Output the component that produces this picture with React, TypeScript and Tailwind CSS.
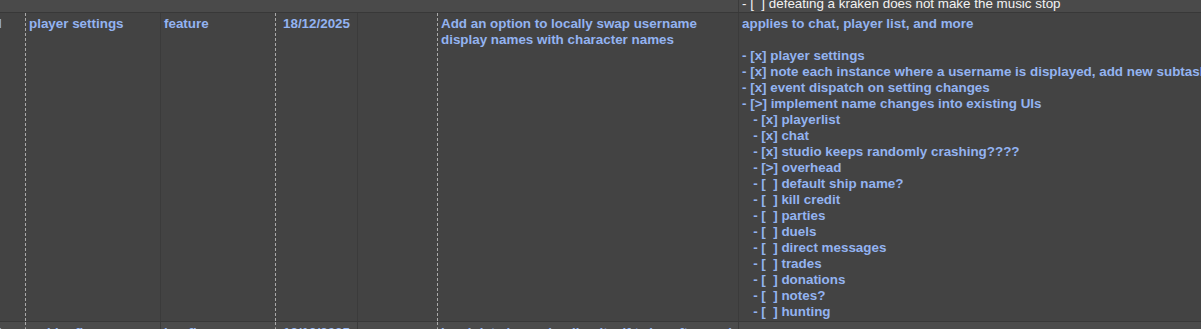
import React from "react";

// column widths + left rule for each cell (dashed user borders vs plain grid lines)
const cols = [
    "w-[25px] shrink-0 overflow-hidden",
    "w-[135px] shrink-0 overflow-hidden border-l border-dashed border-[#a9a9a9] pl-[3px]",
    "w-[115px] shrink-0 overflow-hidden border-l border-[#3b3b3b] pl-[3px]",
    "w-[82px] shrink-0 overflow-hidden border-l border-dashed border-[#a9a9a9] pl-[7px]",
    "w-[80px] shrink-0 overflow-hidden border-l border-[#3b3b3b] pl-[3px]",
    "w-[301px] shrink-0 overflow-hidden border-l border-dashed border-[#a9a9a9] pl-[3px]",
    "w-[463px] shrink-0 overflow-hidden border-l border-[#3b3b3b] pl-[3px]",
];

const Row = ({ cells, className }: { cells: React.ReactNode[]; className: string }) => (
    <div className={`flex shrink-0 overflow-hidden border-b border-[#383838] ${className}`}>
        {cols.map((c, i) => (
            <div key={i} className={c}>
                {cells[i]}
            </div>
        ))}
    </div>
);

const tasks = [
    "- [x] player settings",
    "- [x] note each instance where a username is displayed, add new subtasks",
    "- [x] event dispatch on setting changes",
    "- [>] implement name changes into existing UIs",
    "   - [x] playerlist",
    "   - [x] chat",
    "   - [x] studio keeps randomly crashing????",
    "   - [>] overhead",
    "   - [  ] default ship name?",
    "   - [  ] kill credit",
    "   - [  ] parties",
    "   - [  ] duels",
    "   - [  ] direct messages",
    "   - [  ] trades",
    "   - [  ] donations",
    "   - [  ] notes?",
    "   - [  ] hunting",
];

export default function App() {
    const blue = "pt-[3px] text-[13.4px] leading-4 font-bold text-[#93b3f1] whitespace-pre";
    return (
        <div className="w-[1201px] h-[329px] overflow-hidden bg-[#434343] font-['Liberation_Sans',Arial,sans-serif] flex flex-col">
            <Row
                className="h-[13px] bg-[#4a4a4a] items-end"
                cells={[
                    null, null, null, null, null, null,
                    <div className="text-[13.4px] leading-4 text-[#f2f2f2] whitespace-pre">
                        - [  ] defeating a kraken does not make the music stop
                    </div>,
                ]}
            />
            <Row
                className="h-[309px] bg-[#434343]"
                cells={[
                    <div className={`${blue} ml-[-2px]`}>I</div>,
                    <div className={blue}>player settings</div>,
                    <div className={blue}>feature</div>,
                    <div className={blue}>18/12/2025</div>,
                    null,
                    <div className={blue}>
                        Add an option to locally swap username
                        {"\n"}display names with character names
                    </div>,
                    <div className={blue}>
                        <div>applies to chat, player list, and more</div>
                        <div className="h-4" />
                        {tasks.map((t) => (
                            <div key={t}>{t}</div>
                        ))}
                    </div>,
                ]}
            />
            <Row
                className="h-[20px] bg-[#4b4b4b]"
                cells={[
                    <div className={`${blue} ml-[-2px]`}>I</div>,
                    <div className={blue}>rudder fix</div>,
                    <div className={blue}>bugfix</div>,
                    <div className={blue}>18/12/2025</div>,
                    null,
                    <div className={blue}>local data keeps loading itself twice after a rejoin</div>,
                    null,
                ]}
            />
        </div>
    );
}
